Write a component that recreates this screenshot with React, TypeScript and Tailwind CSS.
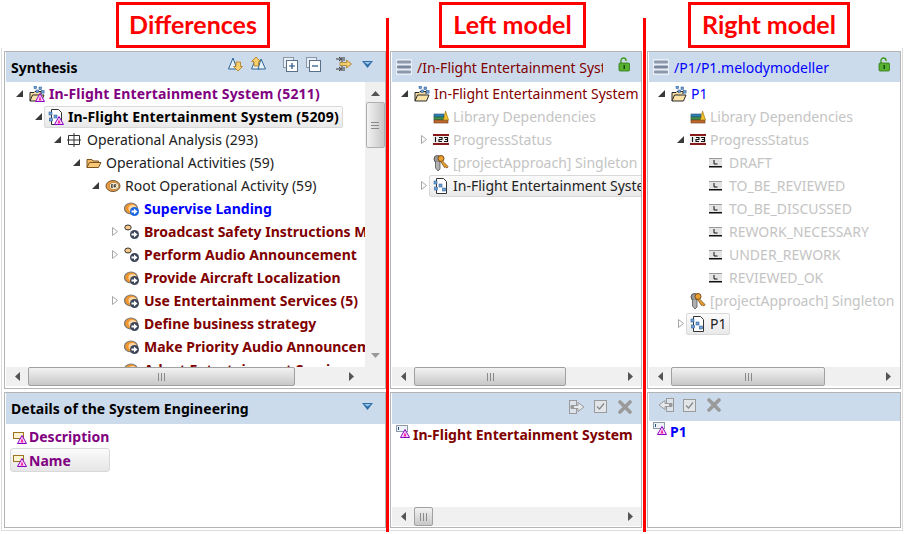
import type { ReactNode } from 'react';

const INDENTS = ['pl-[4px]', 'pl-[23px]', 'pl-[42px]', 'pl-[61px]', 'pl-[80px]', 'pl-[99px]'];

function Warn({ x = 6, y = 7 }: { x?: number; y?: number }) {
    return (
        <g transform={`translate(${x} ${y})`}>
            <path d="M5 .5 9.500 8.500H.5Z" fill="#f6e0ff" stroke="#8a00c0" strokeWidth="1" />
            <path d="M3.500 7.500 5 3l1.500 4.500Z" fill="#ff20a0" />
        </g>
    );
}

function Dots() {
    return (
        <g fill="#6fa3d8" stroke="#1f4f8a" strokeWidth=".5">
            <rect x="5" y="0" width="2.600" height="2.600" />
            <rect x="10" y="1" width="2.600" height="2.600" />
            <rect x="7" y="4" width="2.600" height="2.600" />
            <rect x="12.500" y="4.500" width="2.600" height="2.600" />
        </g>
    );
}

function OpenFolder({ dots, warn }: { dots?: boolean; warn?: boolean }) {
    return (
        <svg width="16" height="16" viewBox="0 0 16 16" className="shrink-0">
            <path d="M1 15V6.500h4l1-1h6V8" fill="#f6dca0" stroke="#2a2a2a" strokeWidth="1" />
            <path d="M1 15 3.500 9H15l-2.500 6Z" fill="#fbe3a8" stroke="#2a2a2a" strokeWidth="1" />
            {dots && <Dots />}
            {warn && <Warn />}
        </svg>
    );
}

function ModelFile({ warn }: { warn?: boolean }) {
    return (
        <svg width="16" height="16" viewBox="0 0 16 16" className="shrink-0">
            <path d="M3.500.5h7l3 3v12h-10Z" fill="#fff" stroke="#333" strokeWidth="1" />
            <g fill="#6fa3d8" stroke="#1f4f8a" strokeWidth=".5">
                <rect x="1" y="3" width="3" height="3" />
                <rect x="6" y="6" width="3" height="3" />
                <rect x="1.500" y="9" width="3" height="3" />
                <rect x="9.500" y="10" width="3" height="3" />
            </g>
            {warn && <Warn />}
        </svg>
    );
}

function GridIcon() {
    return (
        <svg width="14" height="16" viewBox="0 0 14 16" className="mr-[2px] shrink-0">
            <path d="M1.500 3.500h11v9h-11ZM7 1v14M0 8h14" fill="none" stroke="#333" strokeWidth="1" />
        </svg>
    );
}

function OrangeFolder() {
    return (
        <svg width="16" height="16" viewBox="0 0 16 16" className="shrink-0">
            <path d="M1 12.500V4.500h5l1 1.500h5.500v2" fill="#f2b866" stroke="#7a5520" strokeWidth="1" />
            <path d="M1 12.500 3.500 7.500H15l-2.500 5Z" fill="#f8c878" stroke="#7a5520" strokeWidth="1" />
        </svg>
    );
}

function RootActivity() {
    return (
        <svg width="16" height="16" viewBox="0 0 16 16" className="shrink-0">
            <ellipse cx="8" cy="8" rx="7" ry="5.500" fill="#f09a3c" stroke="#6b5a40" strokeWidth="1" />
            <ellipse cx="9" cy="8" rx="4.500" ry="3.500" fill="#fff2d8" stroke="#8a6a30" strokeWidth=".6" />
            <path d="M6.500 6.500v3h1.200q.8-1.500 0-3ZM9.500 9.500v-3h1.200q.6.800-.5 1.500l.8 1.500" fill="none" stroke="#222" strokeWidth=".8" />
        </svg>
    );
}

function Activity({ tone = 'dark', small }: { tone?: 'dark' | 'blue'; small?: boolean }) {
    const badge = tone === 'blue' ? '#1a66e0' : '#3c4658';
    return (
        <svg width="16" height="16" viewBox="0 0 16 16" className="shrink-0">
            {small ? (
                <ellipse cx="4" cy="3.500" rx="3.200" ry="2.500" fill="#f8c888" stroke="#333" strokeWidth="1" />
            ) : (
                <>
                    <ellipse cx="7" cy="7.500" rx="6.500" ry="5.500" fill="#f0962e" stroke="#777" strokeWidth="1.200" />
                    <ellipse cx="8.500" cy="7.500" rx="4" ry="3.500" fill="#fbd9a8" />
                </>
            )}
            <circle cx="10.500" cy="10.500" r="4.500" fill={badge} />
            <path d="M7.500 9.500h2.500V7.500l3.500 3-3.500 3v-2H7.500Z" fill="#fff" />
        </svg>
    );
}

function Books() {
    return (
        <svg width="16" height="16" viewBox="0 0 16 16" className="shrink-0">
            <rect x="1" y="5" width="10" height="3" fill="#2f7fb8" stroke="#20506f" strokeWidth=".6" />
            <rect x="1" y="8" width="10" height="3" fill="#3f9050" stroke="#245a30" strokeWidth=".6" />
            <rect x="1" y="11" width="14" height="3" fill="#c06a30" stroke="#6a3818" strokeWidth=".6" />
            <path d="M10.500 11 12.500 2 15.500 11Z" fill="#f2c230" stroke="#a07810" strokeWidth=".7" />
        </svg>
    );
}

function EnumIcon() {
    return (
        <svg width="16" height="16" viewBox="0 0 16 16" className="shrink-0">
            <rect x="0" y="2" width="16" height="2" fill="#8a1a1a" />
            <rect x="0" y="4" width="16" height="7" fill="#eee" />
            <rect x="0" y="11" width="16" height="2" fill="#8a1a1a" />
            <path d="M2.500 5v5M6 5.500h3v2H6V9.500h3M11 5.500h3.500V9.500H11M12 7.500h2.500" fill="none" stroke="#111" strokeWidth="1.100" />
        </svg>
    );
}

function LiteralIcon() {
    return (
        <svg width="14" height="16" viewBox="0 0 14 16" className="mr-[2px] shrink-0">
            <rect x="0" y="3" width="13" height="8" fill="#e4e4e4" />
            <rect x="0" y="11" width="13" height="1.500" fill="#111" />
            <rect x="0" y="3" width="13" height="1" fill="#999" />
            <path d="M5 5v4h3.500" fill="none" stroke="#111" strokeWidth="1" />
        </svg>
    );
}

function KeyIcon() {
    return (
        <svg width="16" height="18" viewBox="0 0 16 18" className="shrink-0">
            <circle cx="4.500" cy="5" r="3.500" fill="#9a9a9a" stroke="#555" strokeWidth="1" />
            <path d="M2.500 8v6l2.500 3 2-2V8" fill="#b0b0b0" stroke="#555" strokeWidth=".8" />
            <circle cx="8" cy="4.500" r="3" fill="#e8a030" stroke="#7a4a10" strokeWidth="1" />
            <path d="M9.500 7 15 12.500l-1 1.500-1.500-1-1 .5L8 8" fill="#e8a030" stroke="#7a4a10" strokeWidth=".8" />
        </svg>
    );
}

function StackIcon() {
    return (
        <svg width="16" height="16" viewBox="0 0 16 16" className="shrink-0">
            <rect x="0" y="0" width="16" height="16" fill="#e8eef6" />
            <rect x="1" y="1.500" width="14" height="3" rx="1" fill="#8c98ac" />
            <rect x="1" y="6.500" width="14" height="3" rx="1" fill="#7b879c" />
            <rect x="1" y="11.500" width="14" height="3" rx="1" fill="#8c98ac" />
        </svg>
    );
}

function LockIcon() {
    return (
        <svg width="12" height="15" viewBox="0 0 12 15" className="shrink-0">
            <path d="M3 6V3.500a2.500 2.500 0 0 1 5 0V4" fill="none" stroke="#3f9a20" strokeWidth="1.400" />
            <rect x="1" y="6" width="10.500" height="8" rx="1" fill="#58b030" stroke="#2f7a18" strokeWidth=".8" />
            <rect x="5.500" y="8" width="1.500" height="4" fill="#174a0c" />
        </svg>
    );
}

function DiffIcon({ up }: { up?: boolean }) {
    return (
        <svg width="16" height="16" viewBox="0 0 16 16" className="shrink-0">
            <path d="M5 2 .5 13h8.500Z" fill="#e8f0f8" stroke="#2a6496" strokeWidth="1" />
            {up && <path d="M10 3 14.500 13H7Z" fill="#e8f0f8" stroke="#2a6496" strokeWidth="1" />}
            <path
                d={up ? 'M5 1 9.500 5.500H7.500V10H3V5.500H.5Z' : 'M10 15 14.500 10.500H12.500V6H8V10.500H5.500Z'}
                fill="#f6cf70"
                stroke="#b07a18"
                strokeWidth=".8"
            />
        </svg>
    );
}

function BoxIcon({ plus }: { plus?: boolean }) {
    return (
        <svg width="15" height="15" viewBox="0 0 15 15" className="shrink-0">
            <rect x=".5" y=".5" width="10" height="10" fill="#e8edf3" stroke="#8a98a8" />
            <rect x="3.500" y="3.500" width="11" height="11" fill="#fff" stroke="#58708a" />
            <path d={plus ? 'M6 9h6M9 6v6' : 'M6 9h6'} stroke="#1f4f80" strokeWidth="1.200" />
        </svg>
    );
}

function SyncIcon() {
    return (
        <svg width="17" height="16" viewBox="0 0 17 16" className="shrink-0">
            <path d="M1 3h5M1 13h5M7 1v5M7 10v5M9 1v4M9 11v4" stroke="#333" strokeWidth="1" />
            <path d="M4 1 6.500 3 4 5M4 11l2.500 2L4 15" fill="none" stroke="#333" strokeWidth="1" />
            <path d="M5 6.500h6.500V4l5 4-5 4V9.500H5Z" fill="#f2cc70" stroke="#a87c20" strokeWidth=".8" />
        </svg>
    );
}

function MenuIcon() {
    return (
        <svg width="11" height="7" viewBox="0 0 11 7" className="shrink-0">
            <path d="M0 0h11L5.500 7Z" fill="#2f6ea8" />
            <path d="M2 1h7L5.500 3.500Z" fill="#9cc4e4" />
        </svg>
    );
}

function MergeIcon({ left }: { left?: boolean }) {
    return (
        <svg width="16" height="16" viewBox="0 0 16 16" className="shrink-0">
            <g transform={left ? 'matrix(-1 0 0 1 16 0)' : undefined}>
                <rect x=".5" y="1.500" width="7" height="13" fill="#dde3ea" stroke="#9a9a9a" />
                <path d="M2 6.500h7V3.500l6 4.500-6 4.500V9.500H2Z" fill="#e6eaef" stroke="#9a9a9a" />
                <rect x="2" y="7" width="3" height="2" fill="#9a9a9a" />
            </g>
        </svg>
    );
}

function CheckBoxIcon() {
    return (
        <svg width="13" height="13" viewBox="0 0 13 13" className="shrink-0">
            <rect x=".5" y=".5" width="12" height="12" fill="#e2e6ea" stroke="#9a9a9a" />
            <path d="M3 6.500 5.500 9 10 3.500" fill="none" stroke="#8a8a8a" strokeWidth="1.300" />
        </svg>
    );
}

function CrossIcon() {
    return (
        <svg width="14" height="14" viewBox="0 0 14 14" className="shrink-0">
            <path d="M2 2 12 12M12 2 2 12" stroke="#9a9a9a" strokeWidth="3.600" strokeLinecap="round" />
        </svg>
    );
}

function AttrWarn() {
    return (
        <svg width="14" height="14" viewBox="0 0 14 14" className="shrink-0">
            <rect x=".5" y="2.500" width="10" height="6" fill="#fff4d0" stroke="#9a7420" />
            <Warn x={4} y={5} />
        </svg>
    );
}

function RefWarn() {
    return (
        <svg width="14" height="14" viewBox="0 0 14 14" className="shrink-0">
            <rect x=".5" y=".5" width="11" height="6" fill="#eef2f6" stroke="#8a98a8" />
            <path d="M2.500 2v3" stroke="#1f4f80" />
            <Warn x={4} y={4} />
        </svg>
    );
}

function Expander({ state }: { state?: 'open' | 'closed' }) {
    return (
        <span className="flex w-[19px] shrink-0 items-center justify-center">
            {state === 'open' && (
                <svg width="7" height="7" viewBox="0 0 7 7">
                    <path d="M7 0v7H0Z" fill="#3a3a3a" />
                </svg>
            )}
            {state === 'closed' && (
                <svg width="6" height="9" viewBox="0 0 6 9">
                    <path d="M.5.500 5.500 4.500.5 8.500Z" fill="#fff" stroke="#a6a6a6" />
                </svg>
            )}
        </span>
    );
}

function TreeRow({
    level,
    expander,
    icon,
    selected,
    className,
    children,
}: {
    level: number;
    expander?: 'open' | 'closed';
    icon: ReactNode;
    selected?: boolean;
    className: string;
    children: ReactNode;
}) {
    return (
        <div className={`flex h-[23px] items-center whitespace-nowrap ${INDENTS[level]}`}>
            <Expander state={expander} />
            {selected ? (
                <span className="-ml-[4px] flex h-[22px] items-center gap-[4px] rounded-[2px] border border-[#d9d9d9] bg-gradient-to-b from-[#fbfbfb] to-[#e9e9e9] pl-[3px] pr-[3px]">
                    {icon}
                    <span className={className}>{children}</span>
                </span>
            ) : (
                <span className="flex items-center gap-[4px]">
                    {icon}
                    <span className={className}>{children}</span>
                </span>
            )}
        </div>
    );
}

function ArrowH({ right }: { right?: boolean }) {
    return (
        <svg width="5" height="9" viewBox="0 0 5 9" className="shrink-0">
            <path d={right ? 'M0 0 5 4.500 0 9Z' : 'M5 0 0 4.500 5 9Z'} fill="#555" />
        </svg>
    );
}

function Grip({ vertical }: { vertical?: boolean }) {
    return (
        <span className={`flex gap-[2px] ${vertical ? 'flex-col' : ''}`}>
            <span className={`bg-[#8a8a8a] ${vertical ? 'h-px w-[8px]' : 'h-[8px] w-px'}`} />
            <span className={`bg-[#8a8a8a] ${vertical ? 'h-px w-[8px]' : 'h-[8px] w-px'}`} />
            <span className={`bg-[#8a8a8a] ${vertical ? 'h-px w-[8px]' : 'h-[8px] w-px'}`} />
        </span>
    );
}

function HScroll({ thumb, thumbW, rightPad }: { thumb: string; thumbW: string; rightPad: string }) {
    return (
        <div className="flex h-[19px] shrink-0 items-center bg-[#f0f0f0] pl-[9px]">
            <ArrowH />
            <div className={`ml-[8px] flex h-[19px] items-center justify-center rounded-[2px] border border-[#a0a0a0] bg-gradient-to-b from-[#f2f2f2] to-[#c8c8c8] ${thumb} ${thumbW}`}>
                <Grip />
            </div>
            <div className={`ml-auto ${rightPad}`}>
                <ArrowH right />
            </div>
        </div>
    );
}

function VScroll() {
    return (
        <div className="relative flex w-[20px] shrink-0 flex-col items-center bg-[#f0f0f0]">
            <svg width="9" height="5" viewBox="0 0 9 5" className="mt-[9px] shrink-0">
                <path d="M0 5 4.500 0 9 5Z" fill="#555" />
            </svg>
            <div className="mt-[6px] flex h-[46px] w-[19px] items-center justify-center rounded-[2px] border border-[#b0b0b0] bg-gradient-to-r from-[#f2f2f2] to-[#c8c8c8]">
                <Grip vertical />
            </div>
            <svg width="9" height="5" viewBox="0 0 9 5" className="mt-auto mb-[9px] shrink-0">
                <path d="M0 0 4.500 5 9 0Z" fill="#999" />
            </svg>
        </div>
    );
}

function Label({ className, children }: { className: string; children: ReactNode }) {
    return (
        <div className={`flex h-[46px] items-center justify-center border-[3px] border-[#ff0000] bg-white pb-[2px] font-['Lato',sans-serif] text-[25px] font-bold leading-none text-[#ff0000] ${className}`}>
            {children}
        </div>
    );
}

const BOLD_RED = 'font-bold text-[#800000]';
const GREY = 'text-[#c4c4c4]';

export default function App() {
    return (
        <div className="relative flex h-[534px] w-[906px] overflow-hidden bg-white pl-[4px] font-['Noto_Sans',sans-serif] text-[14px] text-black">
            {/* faint outer window frame */}
            <div className="absolute left-[1px] top-[48px] h-[483px] w-[902px] border-x border-b border-[#dcdcdc]" />

            {/* differences column */}
            <div className="relative flex w-[382px] shrink-0 flex-col">
                <div className="h-[51px] pt-[2px]">
                    <Label className="ml-[112px] w-[154px]">Differences</Label>
                </div>
                <section className="flex h-[338px] flex-col border border-[#b4b4b4] bg-white pl-px">
                    <header className="flex h-[30px] shrink-0 items-center bg-[#ccdbec] pl-[5px] pr-[12px]">
                        <span className="font-bold">Synthesis</span>
                        <span className="ml-auto flex -translate-y-[3px] items-center">
                            <DiffIcon />
                            <span className="ml-[7px]"><DiffIcon up /></span>
                            <span className="ml-[16px]"><BoxIcon plus /></span>
                            <span className="ml-[8px]"><BoxIcon /></span>
                            <span className="ml-[14px]"><SyncIcon /></span>
                            <span className="ml-[10px]"><MenuIcon /></span>
                        </span>
                    </header>
                    <div className="flex h-[285px] shrink-0">
                        <div className="min-w-0 flex-1 overflow-hidden">
                            <TreeRow level={0} expander="open" icon={<OpenFolder dots warn />} className="font-bold tracking-[0.16px] text-[#800080]">In-Flight Entertainment System (5211)</TreeRow>
                            <TreeRow level={1} expander="open" selected icon={<ModelFile warn />} className="font-bold tracking-[0.16px] text-black">In-Flight Entertainment System (5209)</TreeRow>
                            <TreeRow level={2} expander="open" icon={<GridIcon />} className="text-[#222]">Operational Analysis (293)</TreeRow>
                            <TreeRow level={3} expander="open" icon={<OrangeFolder />} className="text-[#222]">Operational Activities (59)</TreeRow>
                            <TreeRow level={4} expander="open" icon={<RootActivity />} className="text-[#222]">Root Operational Activity (59)</TreeRow>
                            <TreeRow level={5} icon={<Activity tone="blue" />} className="font-bold text-[#0000ff]">Supervise Landing</TreeRow>
                            <TreeRow level={5} expander="closed" icon={<Activity small />} className={BOLD_RED}>Broadcast Safety Instructions Messages</TreeRow>
                            <TreeRow level={5} expander="closed" icon={<Activity small />} className={BOLD_RED}>Perform Audio Announcement</TreeRow>
                            <TreeRow level={5} icon={<Activity />} className={BOLD_RED}>Provide Aircraft Localization</TreeRow>
                            <TreeRow level={5} expander="closed" icon={<Activity />} className={BOLD_RED}>Use Entertainment Services (5)</TreeRow>
                            <TreeRow level={5} icon={<Activity />} className={BOLD_RED}>Define business strategy</TreeRow>
                            <TreeRow level={5} icon={<Activity />} className={BOLD_RED}>Make Priority Audio Announcement</TreeRow>
                            <TreeRow level={5} icon={<Activity />} className={BOLD_RED}>Adapt Entertainment Services</TreeRow>
                        </div>
                        <VScroll />
                    </div>
                    <HScroll thumb="ml-[8px]" thumbW="w-[267px]" rightPad="pr-[31px]" />
                </section>
                <section className="mt-[3px] flex h-[136px] flex-col border border-[#b4b4b4] bg-white pl-px">
                    <header className="flex h-[31px] shrink-0 items-center bg-[#ccdbec] pl-[5px] pr-[12px]">
                        <span className="font-bold tracking-[0.06px]">Details of the System Engineering</span>
                        <span className="ml-auto -translate-y-[2px]"><MenuIcon /></span>
                    </header>
                    <div className="flex h-[24px] items-center gap-[2px] pl-[7px] pt-px font-bold text-[#800080]">
                        <AttrWarn />
                        Description
                    </div>
                    <div className="ml-[4px] flex h-[24px] w-[100px] items-center gap-[2px] rounded-[3px] border border-[#d9d9d9] bg-gradient-to-b from-[#fbfbfb] to-[#e6e6e6] pl-[2px] font-bold text-[#800080]">
                        <AttrWarn />
                        Name
                    </div>
                </section>
            </div>

            {/* left model column */}
            <div className="relative ml-[4px] flex w-[252px] shrink-0 flex-col">
                <div className="h-[51px] pt-[2px]">
                    <Label className="ml-[49px] w-[147px]">Left model</Label>
                </div>
                <section className="flex h-[338px] flex-col border border-[#b4b4b4] bg-white pl-px">
                    <header className="flex h-[30px] shrink-0 items-center bg-[#ccdbec] pl-[4px] pr-[11px]">
                        <StackIcon />
                        <span className="ml-[5px] w-[186px] overflow-hidden whitespace-nowrap text-[#800000]">/In-Flight Entertainment System</span>
                        <span className="ml-auto -translate-y-[3px]"><LockIcon /></span>
                    </header>
                    <div className="-ml-px h-[285px] shrink-0 overflow-hidden">
                        <TreeRow level={0} expander="open" icon={<OpenFolder dots />} className="text-[#800000]">In-Flight Entertainment System</TreeRow>
                        <TreeRow level={1} icon={<Books />} className={GREY}>Library Dependencies</TreeRow>
                        <TreeRow level={1} expander="closed" icon={<EnumIcon />} className={GREY}>ProgressStatus</TreeRow>
                        <TreeRow level={1} icon={<KeyIcon />} className={GREY}>[projectApproach] Singleton</TreeRow>
                        <TreeRow level={1} expander="closed" selected icon={<ModelFile />} className="text-[#222]">In-Flight Entertainment System</TreeRow>
                    </div>
                    <HScroll thumb="ml-[8px]" thumbW="w-[152px]" rightPad="pr-[8px]" />
                </section>
                <section className="mt-[3px] flex h-[136px] flex-col border border-[#b4b4b4] bg-white pl-px">
                    <header className="flex h-[31px] shrink-0 items-center justify-end gap-[9px] bg-[#ccdbec] pr-[9px]">
                        <span className="flex -translate-y-[2px] items-center gap-[9px]">
                            <MergeIcon />
                            <CheckBoxIcon />
                            <span className="ml-[2px]"><CrossIcon /></span>
                        </span>
                    </header>
                    <div className={`flex h-[20px] shrink-0 items-center gap-[3px] pl-[4px] ${BOLD_RED}`}>
                        <span className="-translate-y-[2px]"><RefWarn /></span>
                        In-Flight Entertainment System
                    </div>
                    <div className="flex-1" />
                    <HScroll thumb="ml-[8px]" thumbW="w-[19px]" rightPad="pr-[8px]" />
                    <div className="h-px shrink-0" />
                </section>
            </div>

            {/* right model column */}
            <div className="relative ml-[5px] flex w-[254px] shrink-0 flex-col">
                <div className="h-[51px] pt-[2px]">
                    <Label className="ml-[41px] w-[162px]">Right model</Label>
                </div>
                <section className="flex h-[338px] flex-col border border-[#b4b4b4] bg-white pl-px">
                    <header className="flex h-[30px] shrink-0 items-center bg-[#ccdbec] pl-[4px] pr-[10px]">
                        <StackIcon />
                        <span className="ml-[5px] text-[#0000ff]">/P1/P1.melodymodeller</span>
                        <span className="ml-auto -translate-y-[3px]"><LockIcon /></span>
                    </header>
                    <div className="-ml-px h-[285px] shrink-0 overflow-hidden">
                        <TreeRow level={0} expander="open" icon={<OpenFolder dots />} className="text-[#0000ff]">P1</TreeRow>
                        <TreeRow level={1} icon={<Books />} className={GREY}>Library Dependencies</TreeRow>
                        <TreeRow level={1} expander="open" icon={<EnumIcon />} className={GREY}>ProgressStatus</TreeRow>
                        <TreeRow level={2} icon={<LiteralIcon />} className={GREY}>DRAFT</TreeRow>
                        <TreeRow level={2} icon={<LiteralIcon />} className={GREY}>TO_BE_REVIEWED</TreeRow>
                        <TreeRow level={2} icon={<LiteralIcon />} className={GREY}>TO_BE_DISCUSSED</TreeRow>
                        <TreeRow level={2} icon={<LiteralIcon />} className={GREY}>REWORK_NECESSARY</TreeRow>
                        <TreeRow level={2} icon={<LiteralIcon />} className={GREY}>UNDER_REWORK</TreeRow>
                        <TreeRow level={2} icon={<LiteralIcon />} className={GREY}>REVIEWED_OK</TreeRow>
                        <TreeRow level={1} icon={<KeyIcon />} className={GREY}>[projectApproach] Singleton</TreeRow>
                        <TreeRow level={1} expander="closed" selected icon={<ModelFile />} className="text-[#222]">P1</TreeRow>
                    </div>
                    <HScroll thumb="ml-[8px]" thumbW="w-[154px]" rightPad="pr-[9px]" />
                </section>
                <section className="mt-[3px] flex h-[136px] flex-col border border-[#b4b4b4] bg-white pl-px">
                    <header className="flex h-[28px] shrink-0 items-center bg-[#ccdbec] pl-[9px]">
                        <span className="flex -translate-y-[2px] items-center gap-[9px]">
                            <MergeIcon left />
                            <CheckBoxIcon />
                            <span className="ml-[2px]"><CrossIcon /></span>
                        </span>
                    </header>
                    <div className="flex h-[20px] items-center gap-[3px] pl-[4px] font-bold text-[#0000ff]">
                        <span className="-translate-y-[2px]"><RefWarn /></span>
                        P1
                    </div>
                </section>
            </div>

            {/* red separators over the panes */}
            <div className="absolute left-[386px] top-[18px] h-[514px] w-[3px] bg-[#ff0000]" />
            <div className="absolute left-[643px] top-[18px] h-[514px] w-[3px] bg-[#ff0000]" />
        </div>
    );
}
